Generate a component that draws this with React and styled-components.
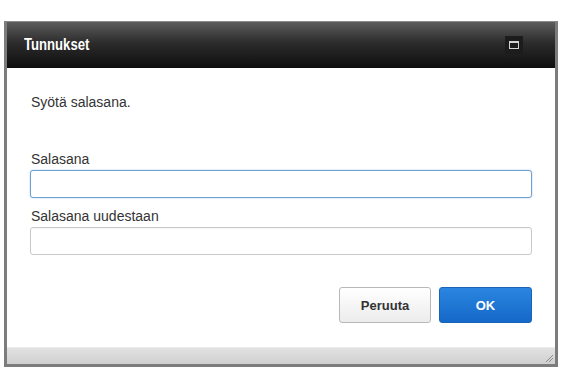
import React from 'react';
import styled, { createGlobalStyle } from 'styled-components';

const GlobalStyle = createGlobalStyle`
  html, body {
    margin: 0;
    padding: 0;
    background: #ffffff;
    font-family: 'Liberation Sans', Arial, sans-serif;
  }
`;

const App = () => {
  return (
    <>
      <GlobalStyle />
      <Page>
        <Dialog>
          <TitleBar>
            <Title>Tunnukset</Title>
            <MaxButton>
              <MaxIcon />
            </MaxButton>
          </TitleBar>
          <Body>
            <Message>Syötä salasana.</Message>
            <Field>
              <Label>Salasana</Label>
              <Input type="password" $focused />
            </Field>
            <Field $gap={10}>
              <Label>Salasana uudestaan</Label>
              <Input type="password" />
            </Field>
            <Actions>
              <Button>Peruuta</Button>
              <Button $primary>OK</Button>
            </Actions>
          </Body>
          <Footer>
            <Grip width="10" height="10" viewBox="0 0 10 10">
              <line x1="9" y1="2" x2="2" y2="9" stroke="#8a8a8a" strokeWidth="1" />
              <line x1="9" y1="5" x2="5" y2="9" stroke="#8a8a8a" strokeWidth="1" />
            </Grip>
          </Footer>
        </Dialog>
      </Page>
    </>
  );
};

export default App;

const Page = styled.div`
  width: 572px;
  height: 377px;
  padding: 21px 0 0 4px;
  box-sizing: border-box;
  overflow: hidden;
`;

const Dialog = styled.div`
  width: 554px;
  display: flex;
  flex-direction: column;
  border: 3px solid #7c7c7c;
  border-top: 1px solid #8a8a8a;
  box-sizing: border-box;
  background: #ffffff;
`;

const TitleBar = styled.div`
  height: 46px;
  display: flex;
  align-items: center;
  justify-content: space-between;
  padding: 0 32px 0 17px;
  background: linear-gradient(to bottom, #5c5c5c 0%, #2c2c2c 45%, #0e0e0e 100%);
`;

/* the original title face is a condensed bold */
const Title = styled.div`
  color: #ffffff;
  font-weight: bold;
  font-size: 16px;
  transform: scaleX(0.82);
  transform-origin: left center;
`;

const MaxButton = styled.div`
  width: 18px;
  height: 18px;
  display: flex;
  align-items: center;
  justify-content: center;
  background: #1c1c1c;
`;

const MaxIcon = styled.div`
  width: 10px;
  height: 8px;
  border: 1px solid #d4d4d4;
  border-top-width: 2px;
  box-sizing: border-box;
`;

const Body = styled.div`
  height: 279px;
  box-sizing: border-box;
  padding: 26px 23px 0 23px;
  display: flex;
  flex-direction: column;
  color: #333333;
  font-size: 14px;
`;

const Message = styled.div`
  line-height: 16px;
  padding-left: 1px;
  margin-bottom: 41px;
`;

const Field = styled.div`
  display: flex;
  flex-direction: column;
  gap: 3px;
  margin-top: ${(p) => p.$gap || 0}px;
`;

const Label = styled.div`
  line-height: 16px;
  padding-left: 1px;
`;

const Input = styled.input`
  height: 28px;
  box-sizing: border-box;
  width: 100%;
  margin: 0;
  border-radius: 3px;
  border: 1px solid ${(p) => (p.$focused ? '#6e9fd4' : '#c9c9c9')};
  box-shadow: ${(p) => (p.$focused ? '0 0 2px rgba(80, 140, 210, 0.45)' : 'inset 0 1px 1px rgba(0,0,0,0.04)')};
  background: #ffffff;
  outline: none;
`;

const Actions = styled.div`
  display: flex;
  justify-content: flex-end;
  gap: 8px;
  margin-top: 32px;
`;

const Button = styled.button`
  width: ${(p) => (p.$primary ? 93 : 92)}px;
  height: 36px;
  border-radius: 3px;
  font-family: 'Liberation Sans', Arial, sans-serif;
  font-weight: bold;
  font-size: 13px;
  cursor: pointer;
  color: ${(p) => (p.$primary ? '#ffffff' : '#333333')};
  border: 1px solid ${(p) => (p.$primary ? '#1a64b8' : '#b8b8b8')};
  background: ${(p) =>
    p.$primary
      ? 'linear-gradient(to bottom, #2a86e0 0%, #1568c8 100%)'
      : 'linear-gradient(to bottom, #ffffff 0%, #ececec 100%)'};
`;

const Footer = styled.div`
  height: 16px;
  display: flex;
  justify-content: flex-end;
  align-items: flex-end;
  border-top: 1px solid #ececec;
  background: linear-gradient(to bottom, #e2e2e2 0%, #cfcfcf 100%);
`;

const Grip = styled.svg`
  display: block;
  margin: 0 1px 1px 0;
`;
